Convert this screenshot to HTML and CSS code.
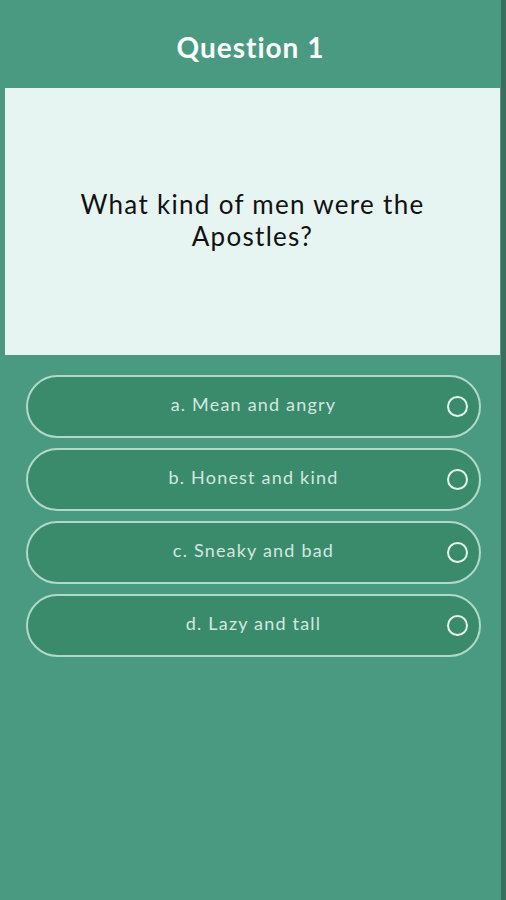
FILE: index.html
```html
<!DOCTYPE html>
<html lang="en">
<head>
    <meta charset="UTF-8">
    <meta name="viewport" content="width=device-width, initial-scale=1.0">
    <title>Quiz</title>
    <link rel="stylesheet" href="styles.css">
</head>
<body>
    <div class="screen">
        <header>
            <h1>Question 1</h1>
        </header>
        <section class="question-box">
            <p>What kind of men were the Apostles?</p>
        </section>
        <div class="options">
            <button class="option"><span>a. Mean and angry</span><i class="radio"></i></button>
            <button class="option"><span>b. Honest and kind</span><i class="radio"></i></button>
            <button class="option"><span>c. Sneaky and bad</span><i class="radio"></i></button>
            <button class="option"><span>d. Lazy and tall</span><i class="radio"></i></button>
        </div>
    </div>
    <div class="edge"></div>
</body>
</html>
```

FILE: styles.css
```css
body {
    margin: 0;
    padding: 0;
    height: 900px;
    display: flex;
    font-family: Lato, "Noto Sans", sans-serif;
    background-color: #4a9a81;
    overflow: hidden;
}

.screen {
    flex: 1;
    display: flex;
    flex-direction: column;
}

/* barra escura na lateral direita */
.edge {
    width: 5px;
    background-color: #3d6d5e;
}

header {
    height: 88px;
    display: flex;
    align-items: center;
    justify-content: center;
}

header h1 {
    margin: 0;
    color: white;
    font-size: 28px;
    font-weight: 700;
    letter-spacing: 1px;
    padding-top: 6px;
}

/* caixa da pergunta */
.question-box {
    margin: 0 1px 0 5px;
    height: 267px;
    background-color: #e7f5f2;
    display: flex;
    align-items: center;
    justify-content: center;
}

.question-box p {
    margin: 0;
    width: 400px;
    text-align: center;
    font-size: 26px;
    line-height: 32px;
    letter-spacing: 1.3px;
    color: #111;
    padding-bottom: 4px;
}

/* lista de respostas */
.options {
    display: flex;
    flex-direction: column;
    gap: 10px;
    margin: 20px 20px 0 26px;
}

.option {
    position: relative;
    height: 63px;
    border: 2px solid #b2d8ca;
    border-radius: 32px;
    background-color: #3a8a6c;
    color: #d2e8e0;
    font-family: Lato, "Noto Sans", sans-serif;
    font-size: 18px;
    font-weight: 400;
    letter-spacing: 1.2px;
    display: flex;
    align-items: center;
    justify-content: center;
    padding: 0 0 6px 0;
    cursor: pointer;
}

.option .radio {
    position: absolute;
    right: 11px;
    top: 19px;
    width: 17px;
    height: 17px;
    border: 2.5px solid #e6f4ef;
    border-radius: 50%;
}
```
